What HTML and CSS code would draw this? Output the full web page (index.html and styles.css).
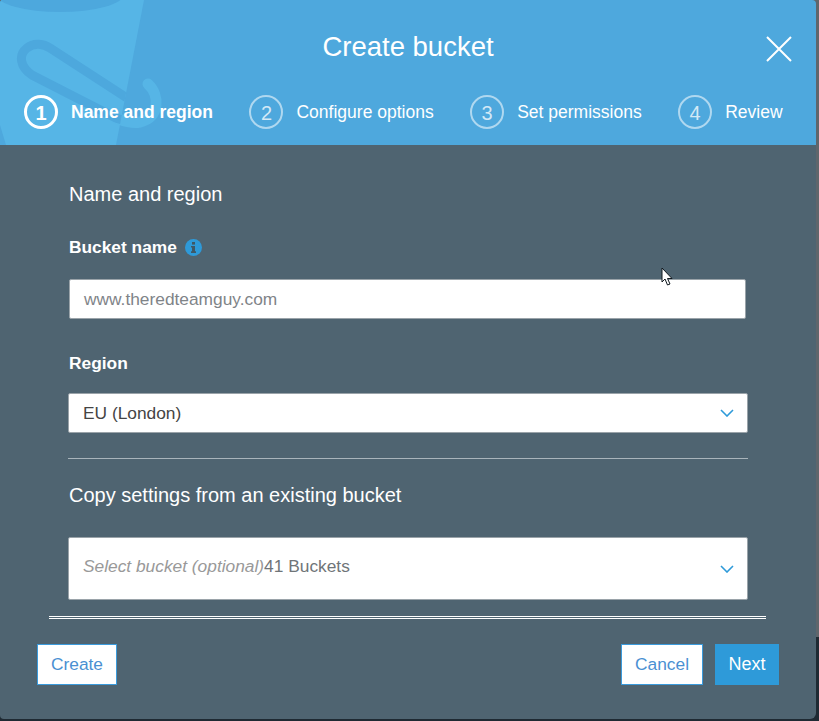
FILE: index.html
```html
<!DOCTYPE html>
<html lang="en">
<head>
  <meta charset="UTF-8" />
  <title>Create bucket</title>
  <link rel="stylesheet" href="styles.css">
</head>
<body>

  <div class="modal">
    <header class="modal-head">
      <svg class="bucket-art" width="190" height="145" viewBox="0 0 190 145">
        <defs>
          <clipPath id="bucket-shape">
            <path d="M0 0H144L116 145H6L0 125Z" />
          </clipPath>
        </defs>
        <path d="M0 0H144L116 145H6L0 125Z" fill="#56b5e6" />
        <ellipse cx="60" cy="-6" rx="64" ry="18" fill="#4da8dd" />
        <path d="M148 84C160 95 160 118 140 122C130 124 122 120 116 118" fill="none" stroke="#56b5e6" stroke-width="11" stroke-linecap="round" />
        <path d="M148 84C160 95 160 118 140 122C130 124 122 120 116 118L32 75C20 67 18 55 27 48C34 42 44 44 50 48L130 100C140 106 146 98 142 88" fill="none" stroke="#4da8dd" stroke-width="9" clip-path="url(#bucket-shape)" />
      </svg>
      <h1 class="modal-title">Create bucket</h1>
      <svg class="close-icon" width="26" height="26" viewBox="0 0 26 26">
        <path d="M1 1L25 25M25 1L1 25" fill="none" stroke="#fff" stroke-width="2" />
      </svg>
      <ol class="steps">
        <li class="step active"><span class="step-num">1</span>Name and region</li>
        <li class="step"><span class="step-num">2</span>Configure options</li>
        <li class="step"><span class="step-num">3</span>Set permissions</li>
        <li class="step"><span class="step-num">4</span>Review</li>
      </ol>
    </header>

    <main class="modal-body">
      <h2 class="section-title">Name and region</h2>
      <label class="field-label">Bucket name
        <svg class="info-icon" width="17" height="17" viewBox="0 0 17 17">
          <circle cx="8.5" cy="8.5" r="8.5" fill="#2e9ad9" />
          <rect x="7" y="3" width="3" height="2.6" fill="#3f5866" />
          <path d="M6 7H10V12.2H11V14H6V12.2H7V8.6H6Z" fill="#3f5866" />
        </svg>
      </label>
      <div class="input">www.theredteamguy.com</div>

      <label class="field-label region-label">Region</label>
      <div class="select">
        <span class="select-value">EU (London)</span>
        <svg class="chevron" width="14" height="8" viewBox="0 0 14 8"><path d="M1 1L7 7L13 1" fill="none" stroke="#2e9ad9" stroke-width="1.6" /></svg>
      </div>

      <hr class="divider">

      <h2 class="section-title copy-title">Copy settings from an existing bucket</h2>
      <div class="select select-tall">
        <span class="select-muted"><em>Select bucket (optional)</em>41 Buckets</span>
        <svg class="chevron" width="14" height="8" viewBox="0 0 14 8"><path d="M1 1L7 7L13 1" fill="none" stroke="#2e9ad9" stroke-width="1.6" /></svg>
      </div>
    </main>

    <div class="double-rule"></div>

    <footer class="modal-foot">
      <a class="btn" href="#">Create</a>
      <div class="foot-right">
        <a class="btn" href="#">Cancel</a>
        <a class="btn btn-primary" href="#">Next</a>
      </div>
    </footer>

    <svg class="cursor" width="13" height="20" viewBox="0 0 13 20">
      <path d="M1 1V15L4 12L6.5 18L9 17L6.5 11.5H11Z" fill="#fff" stroke="#10181f" stroke-width="1" />
    </svg>
  </div>

</body>
</html>
```

FILE: styles.css
```css
body {
  margin: 0;
  height: 721px;
  overflow: hidden;
  font-family: 'Liberation Sans', Arial, sans-serif;
  background: linear-gradient(#5f666c 637px, #1f2a33 637px);
}
.modal {
  position: relative;
  width: 816px;
  height: 719px;
  background-color: #4f6471;
  border-radius: 3px 4px 6px 4px;
  overflow: hidden;
}
.modal-head {
  position: relative;
  height: 145px;
  background-color: #4ea8dd;
  overflow: hidden;
}
.bucket-art {
  position: absolute;
  left: 0;
  top: 0;
}
.modal-title {
  position: relative;
  margin: 0;
  padding-top: 31px;
  text-align: center;
  font-size: 27.5px;
  line-height: 31px;
  font-weight: 400;
  color: #fff;
}
.close-icon {
  position: absolute;
  left: 766px;
  top: 36px;
}
.steps {
  position: relative;
  display: flex;
  margin: 0;
  padding: 33px 0 0 24px;
  list-style: none;
}
.step {
  display: flex;
  align-items: center;
  height: 34px;
  margin-right: 36.5px;
  font-size: 17.5px;
  white-space: nowrap;
  color: #fff;
}
.step.active {
  font-weight: 700;
}
.step-num {
  box-sizing: border-box;
  width: 34px;
  height: 34px;
  margin-right: 13px;
  border: 2px solid rgba(255, 255, 255, 0.55);
  border-radius: 50%;
  text-align: center;
  font-size: 20px;
  line-height: 32px;
  font-weight: 400;
  color: rgba(255, 255, 255, 0.75);
}
.step.active .step-num {
  border-color: #fff;
  border-width: 3px;
  line-height: 30px;
  color: #fff;
  font-weight: 700;
}
.modal-body {
  padding: 37px 68px 0 68px;
}
.section-title {
  margin: 0;
  padding-left: 1px;
  font-size: 20px;
  line-height: 24px;
  font-weight: 400;
  color: #fff;
}
.field-label {
  display: flex;
  align-items: center;
  gap: 8px;
  margin-top: 31px;
  padding-left: 1px;
  font-size: 17.33px;
  line-height: 20px;
  font-weight: 700;
  color: #fff;
}
.input {
  box-sizing: border-box;
  width: 677px;
  height: 40px;
  margin: 22px 0 0 1px;
  padding-left: 14px;
  background: #fff;
  border: 1px solid #9aa3a9;
  border-radius: 2px;
  font-size: 17.33px;
  line-height: 38px;
  color: #7f8488;
}
.region-label {
  margin-top: 34px;
}
.select {
  box-sizing: border-box;
  display: flex;
  justify-content: space-between;
  align-items: center;
  width: 680px;
  height: 40px;
  margin-top: 20px;
  padding: 0 13px 0 14px;
  background: #fff;
  border: 1px solid #9aa3a9;
  border-radius: 2px;
  font-size: 17.33px;
  color: #444;
}
.divider {
  margin: 25px 0 0;
  border: 0;
  border-top: 1px solid #a9b4bb;
}
.copy-title {
  margin-top: 24px;
}
.select-tall {
  height: 63px;
  margin-top: 30px;
}
.select-muted {
  position: relative;
  top: -2px;
  color: #6f7478;
}
.select-muted em {
  color: #999;
}
.double-rule {
  box-sizing: border-box;
  width: 717px;
  height: 3px;
  margin: 16px 0 0 49px;
  border-top: 1px solid #fff;
  border-bottom: 1px solid #fff;
}
.modal-foot {
  display: flex;
  justify-content: space-between;
  padding: 25px 37px 0;
}
.foot-right {
  display: flex;
  gap: 12px;
}
.btn {
  box-sizing: border-box;
  height: 41px;
  padding: 0 13px;
  background: #fff;
  border: 1px solid #3b9bdc;
  font-size: 17.33px;
  line-height: 39px;
  color: #4a90d2;
  text-decoration: none;
}
.btn-primary {
  width: 64px;
  padding: 0;
  text-align: center;
  background: #2e9ad9;
  border-color: #2e9ad9;
  font-size: 18px;
  color: #fff;
}
.cursor {
  position: absolute;
  left: 661px;
  top: 267px;
}
```
